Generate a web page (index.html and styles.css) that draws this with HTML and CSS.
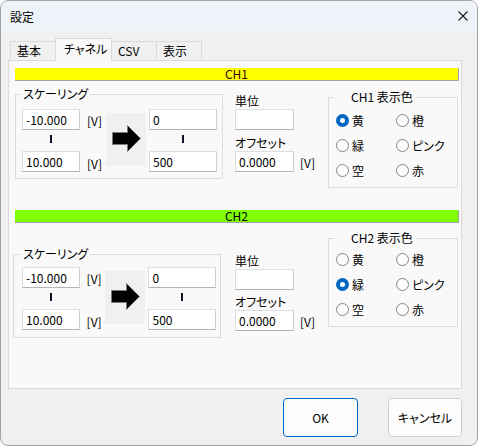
FILE: index.html
```html
<!DOCTYPE html>
<html lang="ja">
<head>
    <meta charset="UTF-8">
    <title>設定</title>
    <link rel="stylesheet" href="styles.css">
</head>
<body>
    <div class="window">
        <!-- Title bar -->
        <div class="titlebar">
            <span class="title">設定</span>
            <svg class="close" width="10" height="10" viewBox="0 0 10 10">
                <path d="M0.5 0.5 L9.5 9.5 M9.5 0.5 L0.5 9.5" stroke="#1a1a1a" stroke-width="1.1" fill="none"/>
            </svg>
        </div>

        <div class="body">
            <!-- Tabs -->
            <div class="tabs">
                <div class="tab">基本</div>
                <div class="tab active">チャネル</div>
                <div class="tab">CSV</div>
                <div class="tab">表示</div>
            </div>

            <div class="panel">
                <!-- CH1 -->
                <section class="channel ch1">
                    <div class="ch-bar yellow">CH1</div>
                    <div class="ch-row">
                        <fieldset class="scaling">
                            <legend>スケーリング</legend>
                            <div class="scale-grid">
                                <div class="col-in">
                                    <input class="field" type="text" value="-10.000">
                                    <div class="sep"><span class="dash"></span></div>
                                    <input class="field" type="text" value="10.000">
                                </div>
                                <div class="col-unit">
                                    <span>[V]</span>
                                    <span>[V]</span>
                                </div>
                                <div class="arrow-box">
                                    <svg width="40" height="53" viewBox="0 0 40 53">
                                        <polygon points="6.5,19.5 21.5,19.5 21.5,12.5 34.5,25.5 21.5,38.5 21.5,31.5 6.5,31.5" fill="#000" stroke="#7a7a7a" stroke-width="1"/>
                                    </svg>
                                </div>
                                <div class="col-out">
                                    <input class="field" type="text" value="0">
                                    <div class="sep"><span class="dash"></span></div>
                                    <input class="field" type="text" value="500">
                                </div>
                            </div>
                        </fieldset>

                        <div class="unit-col">
                            <div class="lbl">単位</div>
                            <input class="field unit-field" type="text" value="">
                            <div class="lbl offset-lbl">オフセット</div>
                            <div class="offset-row">
                                <input class="field unit-field" type="text" value="0.0000">
                                <span class="v">[V]</span>
                            </div>
                        </div>

                        <fieldset class="colors">
                            <legend>CH1 表示色</legend>
                            <div class="radio-grid">
                                <label class="opt"><span class="radio checked"></span>黄</label>
                                <label class="opt"><span class="radio"></span>橙</label>
                                <label class="opt"><span class="radio"></span>緑</label>
                                <label class="opt"><span class="radio"></span>ピンク</label>
                                <label class="opt"><span class="radio"></span>空</label>
                                <label class="opt"><span class="radio"></span>赤</label>
                            </div>
                        </fieldset>
                    </div>
                </section>

                <!-- CH2 -->
                <section class="channel ch2">
                    <div class="ch-bar green">CH2</div>
                    <div class="ch-row">
                        <fieldset class="scaling">
                            <legend>スケーリング</legend>
                            <div class="scale-grid">
                                <div class="col-in">
                                    <input class="field" type="text" value="-10.000">
                                    <div class="sep"><span class="dash"></span></div>
                                    <input class="field" type="text" value="10.000">
                                </div>
                                <div class="col-unit">
                                    <span>[V]</span>
                                    <span>[V]</span>
                                </div>
                                <div class="arrow-box">
                                    <svg width="40" height="53" viewBox="0 0 40 53">
                                        <polygon points="6.5,19.5 21.5,19.5 21.5,12.5 34.5,25.5 21.5,38.5 21.5,31.5 6.5,31.5" fill="#000" stroke="#7a7a7a" stroke-width="1"/>
                                    </svg>
                                </div>
                                <div class="col-out">
                                    <input class="field" type="text" value="0">
                                    <div class="sep"><span class="dash"></span></div>
                                    <input class="field" type="text" value="500">
                                </div>
                            </div>
                        </fieldset>

                        <div class="unit-col">
                            <div class="lbl">単位</div>
                            <input class="field unit-field" type="text" value="">
                            <div class="lbl offset-lbl">オフセット</div>
                            <div class="offset-row">
                                <input class="field unit-field" type="text" value="0.0000">
                                <span class="v">[V]</span>
                            </div>
                        </div>

                        <fieldset class="colors">
                            <legend>CH2 表示色</legend>
                            <div class="radio-grid">
                                <label class="opt"><span class="radio"></span>黄</label>
                                <label class="opt"><span class="radio"></span>橙</label>
                                <label class="opt"><span class="radio checked"></span>緑</label>
                                <label class="opt"><span class="radio"></span>ピンク</label>
                                <label class="opt"><span class="radio"></span>空</label>
                                <label class="opt"><span class="radio"></span>赤</label>
                            </div>
                        </fieldset>
                    </div>
                </section>
            </div>

            <!-- Dialog buttons -->
            <div class="buttons">
                <button class="btn default">OK</button>
                <button class="btn">キャンセル</button>
            </div>
        </div>
    </div>
</body>
</html>
```

FILE: styles.css
```css
/* General */
body {
    margin: 0;
    background-color: #ffffff;
    font-family: "Noto Sans CJK JP", sans-serif;
    font-size: 12px;
    line-height: 14px;
    color: #000;
    font-feature-settings: "palt";
}

.window {
    width: 478px;
    height: 446px;
    box-sizing: border-box;
    border: 1px solid #a3a3a3;
    border-radius: 8px;
    background-color: #f0f0f0;
    overflow: hidden;
}

/* Title bar */
.titlebar {
    height: 30px;
    display: flex;
    align-items: center;
    justify-content: space-between;
    padding: 0 9px 0 9px;
    background-color: #eef3f9;
}

.title {
    font-size: 12px;
    padding-top: 1px;
}

.close {
    display: block;
    margin-top: -1px;
}

/* Body */
.body {
    padding-left: 7px;
}

/* Tabs */
.tabs {
    display: flex;
    align-items: flex-end;
    height: 22px;
    margin-top: 7px;
    padding-left: 2px;
}

.tab {
    height: 19px;
    box-sizing: border-box;
    width: 46px;
    padding-left: 6px;
    border: 1px solid #d9d9d9;
    border-bottom: none;
    background-color: #f0f0f0;
    line-height: 18px;
    margin-left: -1px;
}

.tab:first-child {
    margin-left: 0;
}

.tab.active {
    width: 57px;
    height: 23px;
    padding-left: 8px;
    line-height: 20px;
    background-color: #f9f9f9;
    margin-bottom: -1px;
    position: relative;
    z-index: 1;
}

/* Tab panel */
.panel {
    width: 454px;
    height: 329px;
    box-sizing: border-box;
    border: 1px solid #dadada;
    background-color: #f9f9f9;
    padding: 7px 2px 0 6px;
}

.channel {
    height: 142px;
}

.ch-bar {
    height: 13px;
    box-sizing: border-box;
    border-right: 1px solid #a0a0a0;
    border-bottom: 1px solid #a0a0a0;
    text-align: center;
    line-height: 12px;
    font-size: 12px;
}

.ch-bar.yellow {
    background-color: #ffff00;
    color: #300000;
}

.ch-bar.green {
    background-color: #80ff00;
    color: #000;
}

.ch-row {
    display: flex;
    align-items: flex-start;
}

/* Group boxes */
fieldset {
    margin: 0;
    min-width: 0;
    border: 1px solid #dcdcdc;
}

legend {
    padding: 0 2px;
    line-height: 14px;
}

.scaling {
    width: 208px;
    box-sizing: border-box;
    margin-top: 6px;
    padding: 8px 5px 6px 6px;
}

.ch2 .scaling {
    margin-top: 24px;
    margin-left: -2px;
    padding: 6px 4px 7px 8px;
}

.scaling legend {
    margin-left: -1px;
}

.scale-grid {
    display: flex;
}

.col-in,
.col-out {
    display: flex;
    flex-direction: column;
}

.col-in {
    width: 58px;
}

.col-out {
    width: 68px;
    margin-left: 3px;
}

.sep {
    height: 21px;
    display: flex;
    justify-content: center;
    padding-top: 5px;
    box-sizing: border-box;
}

.dash {
    width: 2px;
    height: 8px;
    background-color: #10102a;
}

.col-unit {
    width: 26px;
    padding-left: 7px;
    box-sizing: border-box;
    display: flex;
    flex-direction: column;
    justify-content: space-between;
    padding-top: 5px;
    padding-bottom: 1px;
}

.arrow-box {
    width: 40px;
    height: 53px;
    margin-top: 4px;
    background-color: #f0f0f0;
}

.arrow-box svg {
    display: block;
}

/* Text fields */
.field {
    display: block;
    width: 100%;
    height: 21px;
    box-sizing: border-box;
    margin: 0;
    padding: 0 3px;
    border: 1px solid #dedede;
    border-bottom-color: #b5b5b5;
    border-right-color: #cfcfcf;
    background-color: #fff;
    font-family: "Noto Sans CJK JP", sans-serif;
    font-size: 12px;
    color: #000;
    outline: none;
}

/* Unit and offset */
.unit-col {
    margin-left: 12px;
    margin-top: 13px;
}

.ch2 .unit-col {
    margin-left: 14px;
    margin-top: 31px;
}

.unit-field {
    width: 59px;
    margin-top: 1px;
}

.offset-lbl {
    margin-top: 6px;
}

.ch2 .offset-lbl {
    margin-top: 5px;
}

.offset-row {
    display: flex;
    align-items: center;
}

.offset-row .v {
    margin-left: 6px;
    padding-top: 4px;
}

/* Colour radio group */
.colors {
    width: 130px;
    box-sizing: border-box;
    margin-top: 9px;
    margin-left: auto;
    margin-right: 1px;
    padding: 4px 0 4px 7px;
}

.ch2 .colors {
    margin-top: 8px;
    padding-top: 2px;
}

.colors legend {
    margin-left: -1px;
    padding: 0 3px 0 16px;
}

.radio-grid {
    display: grid;
    grid-template-columns: 60px 60px;
    grid-auto-rows: 25px;
}

.opt {
    display: flex;
    align-items: center;
}

.radio {
    width: 13px;
    height: 13px;
    box-sizing: border-box;
    border: 1px solid #858585;
    border-radius: 50%;
    background-color: #fcfcfc;
    margin-right: 3px;
}

.radio.checked {
    border: 4px solid #0067c0;
    background-color: #fff;
}

/* Dialog buttons */
.buttons {
    width: 454px;
    display: flex;
    justify-content: flex-end;
    gap: 30px;
    margin-top: 9px;
}

.btn {
    width: 75px;
    height: 39px;
    border: 1px solid #d0d0d0;
    border-radius: 4px;
    background-color: #fdfdfd;
    font-family: "Noto Sans CJK JP", sans-serif;
    font-size: 12px;
    font-feature-settings: "palt";
    color: #000;
    padding: 0;
}

.btn.default {
    border-color: #0067c0;
}

.btn + .btn {
    width: 74px;
}
```
